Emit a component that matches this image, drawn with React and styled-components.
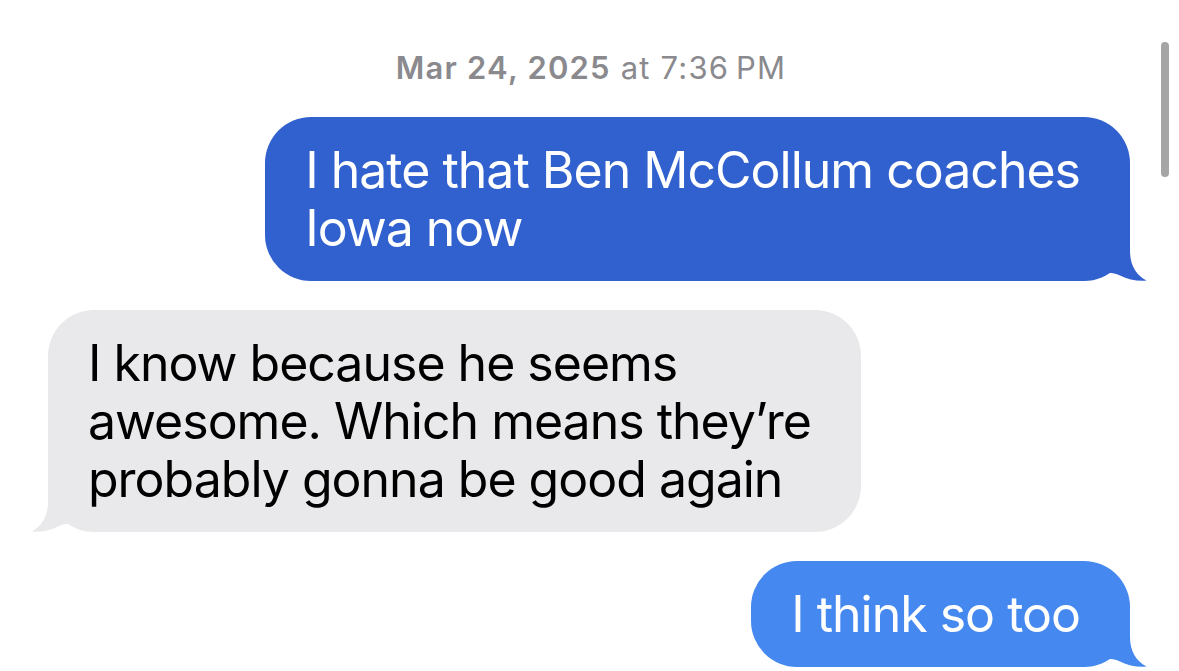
import React from "react";
import styled, { createGlobalStyle } from "styled-components";

const GlobalStyle = createGlobalStyle`
  html, body { margin: 0; padding: 0; background: #ffffff; }
  body { font-family: Inter, "Liberation Sans", Arial, sans-serif; -webkit-font-smoothing: antialiased; }
  * { box-sizing: border-box; }
`;

const Screen = styled.div`
  position: relative;
  width: 1179px;
  height: 671px;
  overflow: hidden;
  background: #ffffff;
`;

const Thread = styled.div`
  display: flex;
  flex-direction: column;
  padding: 51px 49px 0 48px;
`;

const Timestamp = styled.div`
  text-align: center;
  font-size: 31px;
  line-height: 34px;
  color: #8a8a8e;
  letter-spacing: 1.2px;
  margin-bottom: 32px;
  padding-left: 4px;
`;

const DatePart = styled.span`
  font-weight: 600;
`;

const TimePart = styled.span`
  font-weight: 400;
`;

const Messages = styled.div`
  display: flex;
  flex-direction: column;
  gap: 29px;
`;

const Row = styled.div`
  display: flex;
  justify-content: ${(p) => (p.$sent ? "flex-end" : "flex-start")};
`;

const Bubble = styled.div`
  position: relative;
  width: max-content;
  padding: 24px 50px 24px 40px;
  border-radius: 46px;
  background: ${(p) => p.$bg};
  color: ${(p) => p.$fg};
  font-size: 50px;
  line-height: 58px;
  letter-spacing: -1px;
`;

const Line = styled.div`
  white-space: nowrap;
`;

const Tail = styled.svg`
  position: absolute;
  bottom: 0;
  width: 40px;
  height: 48px;
  ${(p) => (p.$sent ? "right: -17px;" : "left: -17px; transform: scaleX(-1);")}
`;

const Scrollbar = styled.div`
  position: absolute;
  top: 42px;
  left: 1161px;
  width: 8px;
  height: 135px;
  border-radius: 4px;
  background: #a5a5a5;
`;

const BubbleTail = ({ sent, color }) => (
  <Tail $sent={sent} viewBox="0 0 40 48" aria-hidden="true">
    <path
      d="M0 0 H23 V18 C23 32 29 42 39.5 47.6 C31 48.6 21 46.5 13 42.5 C9 40.8 5 39.8 2 39.8 L0 39.8 Z"
      fill={color}
    />
  </Tail>
);

const messages = [
  {
    sent: true,
    bg: "#3160cf",
    fg: "#ffffff",
    lines: ["I hate that Ben McCollum coaches", "Iowa now"],
  },
  {
    sent: false,
    bg: "#e9e9eb",
    fg: "#000000",
    lines: [
      "I know because he seems",
      "awesome. Which means they\u2019re",
      "probably gonna be good again",
    ],
  },
  {
    sent: true,
    bg: "#4589f0",
    fg: "#ffffff",
    lines: ["I think so too"],
  },
];

export default function App() {
  return (
    <Screen>
      <GlobalStyle />
      <Thread>
        <Timestamp>
          <DatePart>Mar 24, 2025</DatePart> <TimePart>at 7:36&#8239;PM</TimePart>
        </Timestamp>
        <Messages>
          {messages.map((m, i) => (
            <Row key={i} $sent={m.sent}>
              <Bubble $bg={m.bg} $fg={m.fg}>
                {m.lines.map((l, j) => (
                  <Line key={j}>{l}</Line>
                ))}
                <BubbleTail sent={m.sent} color={m.bg} />
              </Bubble>
            </Row>
          ))}
        </Messages>
      </Thread>
      <Scrollbar />
    </Screen>
  );
}
